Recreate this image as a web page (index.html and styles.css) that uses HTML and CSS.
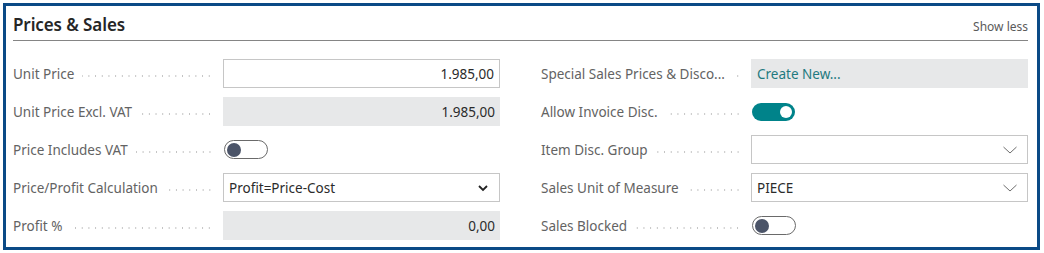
FILE: index.html
```html
<!DOCTYPE html>
<html lang="en">
<head>
<meta charset="utf-8">
<title>Prices &amp; Sales</title>
<link rel="stylesheet" href="styles.css">
</head>
<body>
<section class="card">
  <header class="card-head">
    <h2 class="title">Prices &amp; Sales</h2>
    <span class="show-less">Show less</span>
  </header>
  <div class="cols">
    <div class="col">
      <div class="row">
        <span class="label"><span class="txt">Unit Price</span></span>
        <div class="field input num">1.985,00</div>
      </div>
      <div class="row">
        <span class="label"><span class="txt">Unit Price Excl. VAT</span></span>
        <div class="field readonly num">1.985,00</div>
      </div>
      <div class="row">
        <span class="label"><span class="txt">Price Includes VAT</span></span>
        <div class="field bare"><span class="toggle off"><span class="knob"></span></span></div>
      </div>
      <div class="row">
        <span class="label"><span class="txt">Price/Profit Calculation</span></span>
        <div class="field input select">
          <span class="val">Profit=Price-Cost</span>
          <svg class="chev-bold" width="12" height="8" viewBox="0 0 12 8"><path d="M2 2 L6 6 L10 2" fill="none" stroke="#222" stroke-width="1.8"/></svg>
        </div>
      </div>
      <div class="row">
        <span class="label"><span class="txt">Profit %</span></span>
        <div class="field readonly num">0,00</div>
      </div>
    </div>
    <div class="col">
      <div class="row">
        <span class="label"><span class="txt">Special Sales Prices &amp; Disco...</span></span>
        <div class="field readonly link">Create New...</div>
      </div>
      <div class="row">
        <span class="label"><span class="txt">Allow Invoice Disc.</span></span>
        <div class="field bare"><span class="toggle on"><span class="knob"></span></span></div>
      </div>
      <div class="row">
        <span class="label"><span class="txt">Item Disc. Group</span></span>
        <div class="field input select">
          <span class="val"></span>
          <svg class="chev-thin" width="16" height="10" viewBox="0 0 16 10"><path d="M1.5 2 L8 8 L14.5 2" fill="none" stroke="#6e6e6e" stroke-width="1"/></svg>
        </div>
      </div>
      <div class="row">
        <span class="label"><span class="txt">Sales Unit of Measure</span></span>
        <div class="field input select">
          <span class="val">PIECE</span>
          <svg class="chev-thin" width="16" height="10" viewBox="0 0 16 10"><path d="M1.5 2 L8 8 L14.5 2" fill="none" stroke="#6e6e6e" stroke-width="1"/></svg>
        </div>
      </div>
      <div class="row">
        <span class="label"><span class="txt">Sales Blocked</span></span>
        <div class="field bare"><span class="toggle off"><span class="knob"></span></span></div>
      </div>
    </div>
  </div>
</section>
</body>
</html>
```

FILE: styles.css
```css
* { box-sizing: border-box; }
html, body { margin: 0; padding: 0; background: #ffffff; }
body {
  padding: 3px;
  font-family: "Noto Sans", "Open Sans", sans-serif;
  color: #212121;
}
.card {
  width: 1037px;
  height: 247px;
  border: 3px solid #0b4a86;
  padding: 0 9px 0 7px;
  background: #fff;
}
.card-head {
  display: flex;
  justify-content: space-between;
  align-items: baseline;
  border-bottom: 1px solid #858585;
  height: 35px;
  padding-top: 7px;
}
.title {
  margin: 0;
  font-size: 17px;
  font-weight: 600;
  color: #262626;
  letter-spacing: -0.1px;
}
.show-less {
  font-size: 12px;
  color: #5a5a5a;
}
.cols {
  display: grid;
  grid-template-columns: 487px 487px;
  column-gap: 41px;
  padding-top: 18px;
}
.col {
  display: flex;
  flex-direction: column;
  gap: 9px;
}
.row {
  display: flex;
  align-items: center;
  height: 29px;
}
.label {
  width: 210px;
  flex: none;
  display: flex;
  align-items: center;
  font-size: 13.5px;
  color: #636363;
  padding-right: 10px;
}
.label::after {
  content: "";
  flex: 1;
  height: 2px;
  margin-left: 8px;
  margin-top: 4px;
  background-image: radial-gradient(circle, #c2c2c2 0.8px, transparent 1px);
  background-size: 6.7px 2px;
  background-repeat: repeat-x;
  background-position: right center;
}
.txt { white-space: nowrap; }
.field {
  flex: 1;
  height: 29px;
  display: flex;
  align-items: center;
  font-size: 13.5px;
  color: #2b2b2b;
}
.input {
  border: 1px solid #c6c6c6;
  background: #fff;
}
.readonly {
  background: #e7e8e9;
}
.num {
  justify-content: flex-end;
  padding-right: 5px;
}
.link {
  padding-left: 6px;
  color: #1f7a80;
}
.select {
  justify-content: space-between;
  padding-left: 5px;
  padding-right: 10px;
}
.select .chev-thin { margin-right: -1px; }
.bare { background: transparent; }
.toggle {
  width: 44px;
  height: 19px;
  border-radius: 10px;
  display: flex;
  align-items: center;
  padding: 0 2px;
  margin-left: 1px;
}
.toggle.off {
  border: 1.5px solid #6a6a6a;
  background: #fff;
}
.toggle.off .knob {
  width: 14px;
  height: 14px;
  border-radius: 50%;
  background: #4b5468;
}
.toggle.on {
  background: #00838a;
  justify-content: flex-end;
  height: 18px;
  width: 43px;
  padding: 0 3px;
}
.toggle.on .knob {
  width: 12px;
  height: 12px;
  border-radius: 50%;
  background: #fff;
}
```
